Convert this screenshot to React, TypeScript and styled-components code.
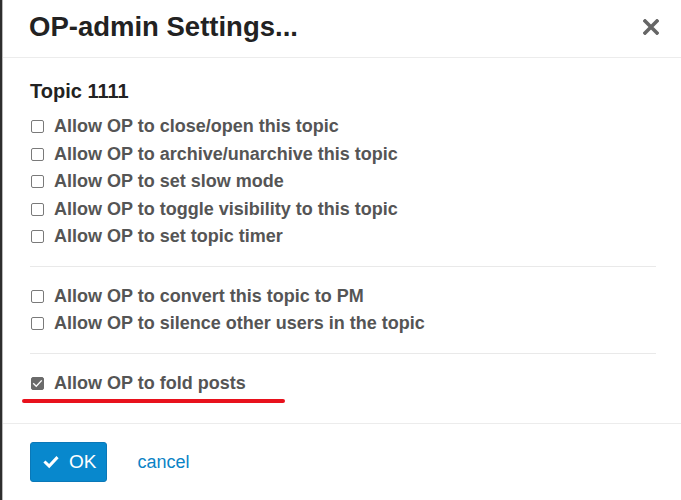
import React, { useState } from "react";
import styled, { createGlobalStyle } from "styled-components";

const GlobalStyle = createGlobalStyle`
  html, body {
    margin: 0;
    padding: 0;
    background: #ffffff;
    font-family: "Liberation Sans", Arial, sans-serif;
  }
`;

const Backdrop = styled.div`
  display: flex;
  min-height: 500px;
  background: #2e2e2e;
  padding-left: 2px;
`;

const Modal = styled.div`
  flex: 1;
  background: #ffffff;
  border-left: 1px solid #b9b9b9;
  display: flex;
  flex-direction: column;
`;

const Header = styled.div`
  height: 58px;
  display: flex;
  align-items: center;
  justify-content: space-between;
  padding: 0 22px 3px 26px;
  box-sizing: border-box;
  border-bottom: 1px solid #ececec;
`;

const Title = styled.h3`
  margin: 0;
  font-size: 27.5px;
  font-weight: 700;
  color: #222222;
`;

const CloseButton = styled.button`
  border: none;
  background: none;
  padding: 0;
  width: 16px;
  height: 16px;
  display: flex;
  cursor: pointer;
`;

const Body = styled.div`
  padding: 21px 25px 20px 27px;
`;

const Heading = styled.h4`
  margin: 0 0 10px;
  font-size: 20px;
  line-height: 24px;
  font-weight: 700;
  color: #222222;
`;

const Option = styled.label`
  display: flex;
  align-items: center;
  gap: 10px;
  height: 27.5px;
  font-size: 18px;
  font-weight: 700;
  color: #555555;
  cursor: pointer;
`;

const Box = styled.span<{ $checked: boolean }>`
  box-sizing: border-box;
  width: 13px;
  height: 13px;
  margin-left: 1px;
  border-radius: 2px;
  border: 1px solid ${(p) => (p.$checked ? "#6b6b6b" : "#7a7a7a")};
  background: ${(p) => (p.$checked ? "#6b6b6b" : "#ffffff")};
  display: flex;
  align-items: center;
  justify-content: center;
  flex-shrink: 0;
`;

const Divider = styled.div`
  height: 1px;
  background: #e9e9e9;
  margin: 15px 0 16px;
`;

const Highlight = styled.div`
  width: 263px;
  height: 4px;
  margin: 2px 0 0 -8px;
  border-radius: 2px;
  background: #e8111c;
`;

const Footer = styled.div`
  border-top: 1px solid #ececec;
  padding: 18px 27px;
  display: flex;
  align-items: center;
  gap: 30px;
`;

const OkButton = styled.button`
  height: 40px;
  display: flex;
  align-items: center;
  gap: 10px;
  padding: 0 10px 0 12px;
  border: 1px solid #0a78b8;
  border-radius: 3px;
  background: #0888cd;
  color: #ffffff;
  font-family: "Liberation Sans", Arial, sans-serif;
  font-size: 19px;
  cursor: pointer;
`;

const CancelLink = styled.a`
  font-size: 18px;
  color: #0a83c6;
  text-decoration: none;
  cursor: pointer;
`;

const CheckMark = ({ size, color }: { size: number; color: string }) => (
  <svg width={size} height={size} viewBox="0 0 16 16">
    <path
      d="M2.5 8.5 L6.2 12 L13.5 4.2"
      fill="none"
      stroke={color}
      strokeWidth={size > 12 ? 3 : 2}
      strokeLinecap="square"
    />
  </svg>
);

const groups = [
  [
    "Allow OP to close/open this topic",
    "Allow OP to archive/unarchive this topic",
    "Allow OP to set slow mode",
    "Allow OP to toggle visibility to this topic",
    "Allow OP to set topic timer",
  ],
  ["Allow OP to convert this topic to PM", "Allow OP to silence other users in the topic"],
  ["Allow OP to fold posts"],
];

const App: React.FC = () => {
  const [checked, setChecked] = useState<Record<string, boolean>>({
    "Allow OP to fold posts": true,
  });

  const toggle = (key: string) =>
    setChecked((prev) => ({ ...prev, [key]: !prev[key] }));

  return (
    <>
      <GlobalStyle />
      <Backdrop>
        <Modal>
          <Header>
            <Title>OP-admin Settings...</Title>
            <CloseButton aria-label="close">
              <svg width="16" height="16" viewBox="0 0 16 16">
                <path
                  d="M2 2 L14 14 M14 2 L2 14"
                  stroke="#666666"
                  strokeWidth="3.6"
                  strokeLinecap="square"
                />
              </svg>
            </CloseButton>
          </Header>

          <Body>
            <Heading>Topic 1111</Heading>
            {groups.map((items, i) => (
              <React.Fragment key={i}>
                {i > 0 && <Divider />}
                {items.map((label) => (
                  <Option key={label} onClick={() => toggle(label)}>
                    <Box $checked={!!checked[label]}>
                      {checked[label] && <CheckMark size={11} color="#ffffff" />}
                    </Box>
                    {label}
                  </Option>
                ))}
              </React.Fragment>
            ))}
            <Highlight />
          </Body>

          <Footer>
            <OkButton>
              <CheckMark size={16} color="#ffffff" />
              OK
            </OkButton>
            <CancelLink>cancel</CancelLink>
          </Footer>
        </Modal>
      </Backdrop>
    </>
  );
};

export default App;
